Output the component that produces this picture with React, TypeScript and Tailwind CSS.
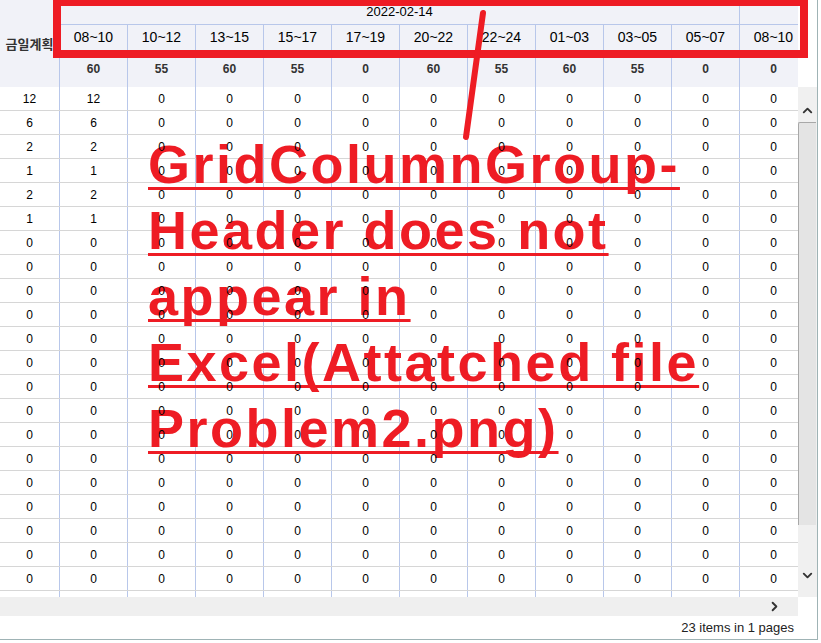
import React from 'react';
import { ChevronUp, ChevronDown, ChevronRight } from 'lucide-react';

const times = ['08~10', '10~12', '13~15', '15~17', '17~19', '20~22', '22~24', '01~03', '03~05', '05~07', '08~10'];
const plan = [60, 55, 60, 55, 0, 60, 55, 60, 55, 0, 0];
const totals = [12, 6, 2, 1, 2, 1, 0, 0, 0, 0, 0, 0, 0, 0, 0, 0, 0, 0, 0, 0, 0, 0];

const note = ['GridColumnGroup-', 'Header does not', 'appear in', 'Excel(Attatched file', 'Problem2.png)'];

// body cell: the border paints under the note, the number sits above it
const Cell: React.FC<{ w: string; children: React.ReactNode }> = ({ w, children }) => (
  <div className={`${w} shrink-0 border-r border-[#b8c7ea] flex items-center justify-center`}>
    <span className="relative z-[15]">{children}</span>
  </div>
);

const App: React.FC = () => {
  return (
    <div className="relative w-[818px] h-[640px] bg-white border-r border-b border-[#9fb3b5] flex flex-col overflow-hidden font-['Liberation_Sans',sans-serif] text-black">
      {/* header */}
      <div className="flex h-[87px] shrink-0">
        <div className="w-[798px] flex overflow-hidden bg-[#f1f2f8]">
          <div className="w-[60px] shrink-0 border-r border-[#b8c7ea] flex items-center justify-center text-[13px] font-bold text-[#333] font-['Noto_Sans_CJK_KR',sans-serif]">
            금일계획
          </div>
          <div className="flex flex-col">
            <div className="flex h-[25px] border-b border-[#b8c7ea]">
              <div className="w-[680px] shrink-0 border-r border-[#b8c7ea] flex items-center justify-center text-[13px]">
                2022-02-14
              </div>
              <div className="w-[68px] shrink-0" />
            </div>
            <div className="flex h-[26px] border-b border-[#b8c7ea]">
              {times.map((t, i) => (
                <div key={i} className="w-[68px] shrink-0 border-r border-[#b8c7ea] flex items-center justify-center text-[14px]">
                  {t}
                </div>
              ))}
            </div>
            <div className="flex h-[36px]">
              {plan.map((v, i) => (
                <div key={i} className="w-[68px] shrink-0 border-r border-[#b8c7ea] flex items-center justify-center text-[12px] font-bold text-[#333]">
                  {v}
                </div>
              ))}
            </div>
          </div>
        </div>
        <div className="flex-1 bg-white" />
      </div>

      {/* body + vertical scrollbar */}
      <div className="flex h-[510px] shrink-0">
        <div className="relative w-[798px] overflow-hidden bg-white">
          <div className="absolute left-[148px] top-[44px] z-10 text-[#ee1c24] font-bold text-[54px] leading-[66px] tracking-[2.5px] whitespace-nowrap">
            {note.map((line) => (
              <div key={line}>
                <span className="underline decoration-[3px] underline-offset-[4px] [text-decoration-skip-ink:none]">{line}</span>
              </div>
            ))}
          </div>
          <div>
            {totals.map((n, r) => (
              <div key={r} className="flex h-[24px] border-b border-[#d6d6d6] text-[12px]">
                <Cell w="w-[60px]">{n}</Cell>
                <Cell w="w-[68px]">{n}</Cell>
                {times.slice(1).map((_, c) => (
                  <Cell key={c} w="w-[68px]">0</Cell>
                ))}
              </div>
            ))}
          </div>
        </div>
        <div className="flex-1 flex flex-col bg-[#f0f0f0]">
          <div className="h-[35px] flex items-end justify-center pb-[4px]">
            <ChevronUp size={15} strokeWidth={3} color="#333" />
          </div>
          <div className="h-[403px] mr-[1px] bg-[#e4e4e4] border-l border-t border-[#a8a8a8] rounded-tl-[2px]" />
          <div className="flex-1" />
          <div className="h-[44px] flex items-center justify-center">
            <ChevronDown size={15} strokeWidth={3} color="#333" />
          </div>
        </div>
      </div>

      {/* horizontal scrollbar */}
      <div className="flex h-[19px] shrink-0">
        <div className="w-[798px] bg-[#efefef] flex items-center justify-end pr-[16px]">
          <ChevronRight size={15} strokeWidth={3} color="#333" />
        </div>
        <div className="flex-1 bg-white" />
      </div>

      {/* footer */}
      <div className="flex-1 flex items-center justify-end pr-[23px] text-[13px] text-[#222]">
        23 items in 1 pages
      </div>

      {/* annotation marks */}
      <div className="absolute left-[53px] top-[-2px] w-[755px] h-[60px] border-[8px] border-[#ee1c24] z-20 pointer-events-none" />
      <svg className="absolute left-0 top-0 z-20 pointer-events-none" width="818" height="640">
        <line x1="483" y1="13" x2="466" y2="137" stroke="#ee1c24" strokeWidth="6" strokeLinecap="round" />
      </svg>
    </div>
  );
};

export default App;
